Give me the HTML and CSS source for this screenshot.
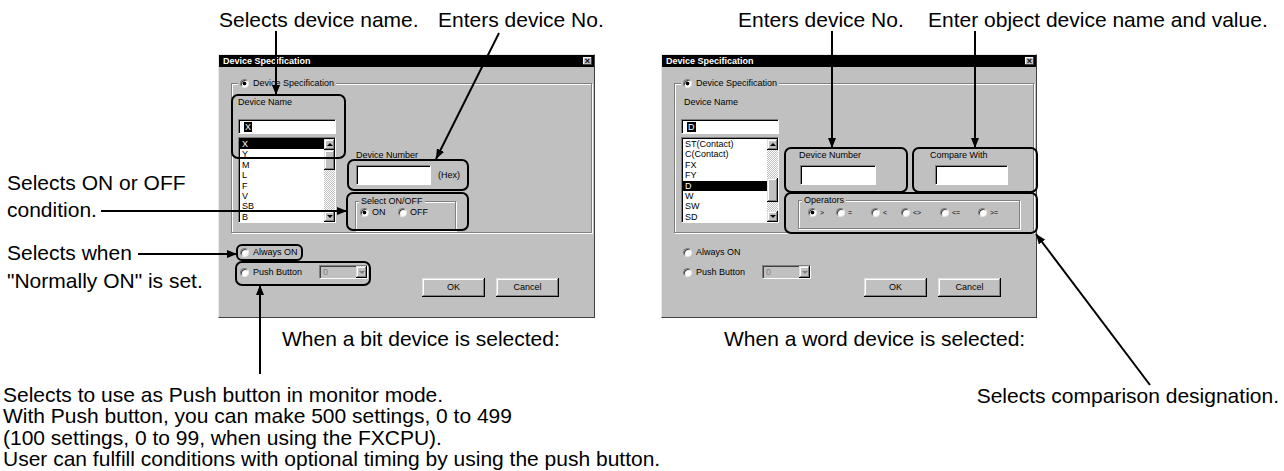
FILE: index.html
```html
<!DOCTYPE html>
<html lang="en">
<head>
    <meta charset="UTF-8">
    <title>Device Specification</title>
    <link rel="stylesheet" href="styles.css">
</head>
<body>
<div class="page">

    <div class="note n-name">Selects device name.</div>
    <div class="note n-number">Enters device No.</div>
    <div class="note n-number2">Enters device No.</div>
    <div class="note n-object">Enter object device name and value.</div>
    <div class="note n-onoff">Selects ON or OFF<br>condition.</div>
    <div class="note n-always">Selects when<br>"Normally ON" is set.</div>
    <div class="note n-bit">When a bit device is selected:</div>
    <div class="note n-word">When a word device is selected:</div>
    <div class="note n-push">Selects to use as Push button in monitor mode.<br>With Push button, you can make 500 settings, 0 to 499<br>(100 settings, 0 to 99, when using the FXCPU).<br>User can fulfill conditions with optional timing by using the push button.</div>
    <div class="note n-compare">Selects comparison designation.</div>

    <!-- bit device dialog -->
    <div class="dialog dlg-bit">
        <div class="titlebar"><span>Device Specification</span><span class="close">×</span></div>
        <div class="group main-group">
            <div class="legend"><span class="radio on"></span>Device Specification</div>
            <div class="group-body">
                <div class="name-col">
                    <div class="lbl">Device Name</div>
                    <div class="edit name-edit"><span class="sel">X</span></div>
                    <div class="list">
                        <ul class="items">
                            <li class="active">X</li>
                            <li>Y</li>
                            <li>M</li>
                            <li>L</li>
                            <li>F</li>
                            <li>V</li>
                            <li>SB</li>
                            <li>B</li>
                        </ul>
                        <div class="scrollbar">
                            <div class="sb-btn up"></div>
                            <div class="sb-track"><div class="sb-thumb"></div></div>
                            <div class="sb-btn down"></div>
                        </div>
                    </div>
                </div>
                <div class="spec">
                    <div class="lbl">Device Number</div>
                    <div class="num-row">
                        <div class="edit num-edit"></div>
                        <span class="hex">(Hex)</span>
                    </div>
                    <div class="group onoff">
                        <div class="legend small">Select ON/OFF</div>
                        <div class="choice-row">
                            <div class="opt w-on"><span class="radio on"></span>ON</div>
                            <div class="opt"><span class="radio"></span>OFF</div>
                        </div>
                    </div>
                </div>
            </div>
        </div>
        <div class="footer">
            <div class="options">
                <div class="opt"><span class="radio"></span>Always ON</div>
                <div class="opt push"><span class="radio"></span>Push Button
                    <div class="combo"><span class="combo-val">0</span><span class="combo-btn"></span></div>
                </div>
            </div>
            <div class="buttons">
                <div class="btn">OK</div>
                <div class="btn">Cancel</div>
            </div>
        </div>
    </div>

    <!-- word device dialog -->
    <div class="dialog dlg-word">
        <div class="titlebar"><span>Device Specification</span><span class="close">×</span></div>
        <div class="group main-group">
            <div class="legend"><span class="radio on"></span>Device Specification</div>
            <div class="group-body">
                <div class="name-col">
                    <div class="lbl">Device Name</div>
                    <div class="edit name-edit"><span class="sel">D</span></div>
                    <div class="list">
                        <ul class="items">
                            <li>ST(Contact)</li>
                            <li>C(Contact)</li>
                            <li>FX</li>
                            <li>FY</li>
                            <li class="active">D</li>
                            <li>W</li>
                            <li>SW</li>
                            <li>SD</li>
                        </ul>
                        <div class="scrollbar">
                            <div class="sb-btn up"></div>
                            <div class="sb-track"><div class="sb-thumb mid"></div></div>
                            <div class="sb-btn down"></div>
                        </div>
                    </div>
                </div>
                <div class="spec">
                    <div class="fields">
                        <div class="field">
                            <div class="lbl">Device Number</div>
                            <div class="edit word-edit"></div>
                        </div>
                        <div class="field compare">
                            <div class="lbl">Compare With</div>
                            <div class="edit cmp-edit"></div>
                        </div>
                    </div>
                    <div class="group operators">
                        <div class="legend small">Operators</div>
                        <div class="choice-row ops">
                            <div class="opt w-gt"><span class="radio on"></span>&gt;</div>
                            <div class="opt w-eq"><span class="radio"></span>=</div>
                            <div class="opt w-lt"><span class="radio"></span>&lt;</div>
                            <div class="opt w-ne"><span class="radio"></span>&lt;&gt;</div>
                            <div class="opt w-le"><span class="radio"></span>&lt;=</div>
                            <div class="opt"><span class="radio"></span>&gt;=</div>
                        </div>
                    </div>
                </div>
            </div>
        </div>
        <div class="footer">
            <div class="options">
                <div class="opt"><span class="radio"></span>Always ON</div>
                <div class="opt push"><span class="radio"></span>Push Button
                    <div class="combo"><span class="combo-val">0</span><span class="combo-btn"></span></div>
                </div>
            </div>
            <div class="buttons">
                <div class="btn">OK</div>
                <div class="btn">Cancel</div>
            </div>
        </div>
    </div>

    <!-- callouts and leader lines -->
    <svg class="marks" width="1284" height="471" viewBox="0 0 1284 471">
        <defs>
            <marker id="tip" markerUnits="userSpaceOnUse" markerWidth="10" markerHeight="8" refX="10" refY="4" orient="auto">
                <path d="M0,0 L10,4 L0,8 z" fill="#000"/>
            </marker>
        </defs>
        <g fill="none" stroke="#000" stroke-width="2">
            <rect x="232" y="95" width="113" height="63" rx="6"/>
            <rect x="348" y="160" width="120" height="30" rx="6"/>
            <rect x="347" y="193" width="121" height="37" rx="6"/>
            <rect x="237" y="245" width="65" height="15" rx="5"/>
            <rect x="236" y="262" width="134" height="23" rx="6"/>
            <rect x="785" y="148" width="122" height="44" rx="6"/>
            <rect x="913" y="148" width="124" height="44" rx="6"/>
            <rect x="785" y="193" width="252" height="40" rx="6"/>
        </g>
        <g stroke="#000" stroke-width="2" marker-end="url(#tip)">
            <line x1="276" y1="31" x2="276" y2="95"/>
            <line x1="499" y1="33" x2="436" y2="159"/>
            <line x1="101" y1="211" x2="347" y2="211"/>
            <line x1="138" y1="254" x2="237" y2="254"/>
            <line x1="260" y1="374" x2="260" y2="285"/>
            <line x1="832" y1="31" x2="832" y2="148"/>
            <line x1="975" y1="31" x2="975" y2="148"/>
            <line x1="1150" y1="385" x2="1036" y2="234"/>
        </g>
    </svg>
</div>
</body>
</html>
```

FILE: styles.css
```css
body {
    margin: 0;
    background-color: #fff;
}

.page {
    position: relative;
    width: 1284px;
    height: 471px;
    font-family: 'Liberation Sans', Arial, sans-serif;
    color: #000;
    overflow: hidden;
}

/* annotation text */

.note {
    position: absolute;
    font-size: 21px;
    line-height: 22px;
    white-space: nowrap;
}

.n-name { left: 219px; top: 9px; }
.n-number { left: 438px; top: 9px; }
.n-number2 { left: 738px; top: 9px; }
.n-object { left: 928px; top: 9px; }
.n-onoff { left: 7px; top: 169px; line-height: 27px; }
.n-always { left: 7px; top: 239px; line-height: 28px; }
.n-bit { left: 282px; top: 328px; }
.n-word { left: 724px; top: 328px; }
.n-push { left: 3px; top: 384px; line-height: 21.4px; }
.n-compare { right: 5px; top: 385px; }

.marks {
    position: absolute;
    top: 0;
    left: 0;
    pointer-events: none;
}

/* dialog window */

.dialog {
    position: absolute;
    top: 54px;
    width: 377px;
    height: 264px;
    box-sizing: border-box;
    background-color: #c0c0c0;
    border: 1px solid;
    border-color: #e8e8e8 #404040 #404040 #e8e8e8;
    font-size: 9px;
    line-height: 11px;
}

.dlg-bit { left: 218px; }
.dlg-word { left: 661px; width: 376px; }

.titlebar {
    height: 12px;
    background-color: #000;
    color: #fff;
    font-weight: bold;
    display: flex;
    align-items: center;
    justify-content: space-between;
    padding: 0 2px 0 4px;
}

.close {
    width: 9px;
    height: 8px;
    background-color: #c0c0c0;
    color: #000;
    font-size: 9px;
    line-height: 8px;
    text-align: center;
    box-shadow: inset -1px -1px #404040, inset 1px 1px #fff;
}

.group {
    box-sizing: border-box;
    border: 1px solid #808080;
    box-shadow: inset 1px 1px #fff, 1px 1px #fff;
}

.main-group {
    margin: 16px 2px 0 12px;
    height: 150px;
}

.legend {
    display: flex;
    align-items: center;
    gap: 4px;
    width: max-content;
    height: 11px;
    margin: -6px 0 0 6px;
    padding: 0 2px;
    background-color: #c0c0c0;
}

.legend.small {
    margin-left: 3px;
}

.group-body {
    display: flex;
    padding-left: 6px;
}

.name-col {
    width: 98px;
    padding-top: 8px;
}

.lbl {
    height: 11px;
}

.dlg-word .name-col .lbl {
    padding-left: 3px;
}

/* sunken fields */

.edit {
    box-sizing: border-box;
    background-color: #fff;
    border: 1px solid;
    border-color: #808080 #fff #fff #808080;
    box-shadow: inset 1px 1px #000;
}

.name-edit {
    margin-top: 11px;
    height: 15px;
    display: flex;
    align-items: center;
    padding-left: 5px;
}

.sel {
    background-color: #000;
    color: #fff;
    padding: 0 1px;
    line-height: 10px;
}

.list {
    margin-top: 3px;
    height: 86px;
    display: flex;
    box-sizing: border-box;
    background-color: #fff;
    border: 1px solid;
    border-color: #808080 #fff #fff #808080;
    box-shadow: inset 1px 1px #000;
}

.items {
    list-style: none;
    margin: 0;
    padding: 1px 0 0 1px;
    flex: 1;
}

.items li {
    height: 10.4px;
    line-height: 10.4px;
    padding-left: 2px;
}

.items li.active {
    background-color: #000;
    color: #fff;
}

.scrollbar {
    width: 11px;
    display: flex;
    flex-direction: column;
    padding: 1px 0 0;
}

.sb-btn,
.sb-thumb,
.btn,
.combo-btn {
    background-color: #c0c0c0;
    box-shadow: inset -1px -1px #000, inset 1px 1px #dfdfdf, inset -2px -2px #808080, inset 2px 2px #fff;
}

.sb-btn {
    height: 11px;
    display: flex;
    align-items: center;
    justify-content: center;
}

.sb-btn::after {
    content: "";
    border-left: 3px solid transparent;
    border-right: 3px solid transparent;
}

.sb-btn.up::after { border-bottom: 3px solid #000; }
.sb-btn.down::after { border-top: 3px solid #000; }

.sb-track {
    flex: 1;
    background: repeating-conic-gradient(#fff 0 25%, #c0c0c0 0 50%) 0 0 / 2px 2px;
}

.sb-thumb {
    height: 20px;
}

.sb-thumb.mid {
    margin-top: 28px;
    height: 24px;
}

/* right side of the group */

.spec {
    margin-left: 20px;
    padding-top: 61px;
}

.num-row {
    display: flex;
    align-items: center;
    margin-top: 4px;
}

.num-edit {
    width: 75px;
    height: 20px;
}

.hex {
    margin-left: 7px;
}

.onoff {
    margin: 16px 0 0 -1px;
    width: 101px;
    height: 30px;
}

.choice-row {
    display: flex;
    align-items: center;
    height: 11px;
    padding-left: 4px;
}

.opt {
    display: flex;
    align-items: center;
    gap: 3px;
    height: 11px;
}

.w-on { width: 38px; }

.fields {
    display: flex;
}

.field .edit {
    margin-top: 4px;
    height: 20px;
}

.word-edit { width: 76px; margin-left: 1px; }

.compare {
    margin-left: 54px;
}

.cmp-edit {
    width: 73px;
    margin-left: 5px;
}

.operators {
    margin: 15px 0 0 -1px;
    width: 222px;
    height: 29px;
}

.ops {
    padding-left: 9px;
    margin-top: 1px;
    font-size: 7px;
}

.w-gt { width: 28px; }
.w-eq { width: 35px; }
.w-lt { width: 30px; }
.w-ne { width: 39px; }
.w-le { width: 38px; }

.radio {
    box-sizing: border-box;
    width: 9px;
    height: 9px;
    border-radius: 50%;
    background: #fff;
    border: 1px solid;
    border-color: #808080 #e8e8e8 #e8e8e8 #808080;
    box-shadow: inset 1px 1px #404040;
    flex-shrink: 0;
}

.radio.on {
    background: radial-gradient(circle, #000 0 1.6px, #fff 2.2px);
}

/* bottom part */

.footer {
    display: flex;
    align-items: flex-start;
}

.options {
    margin: 14px 0 0 21px;
    display: flex;
    flex-direction: column;
    gap: 7px;
}

.opt.push {
    height: 14px;
    gap: 4px;
}

.options .opt {
    gap: 4px;
}

.combo {
    margin-left: 13px;
    width: 49px;
    height: 14px;
    box-sizing: border-box;
    display: flex;
    border: 1px solid;
    border-color: #808080 #fff #fff #808080;
    box-shadow: inset 1px 1px #404040;
    color: #808080;
}

.combo-val {
    padding: 1px 0 0 3px;
    line-height: 11px;
}

.combo-btn {
    margin-left: auto;
    width: 11px;
    display: flex;
    align-items: center;
    justify-content: center;
}

.combo-btn::after {
    content: "";
    border-left: 3px solid transparent;
    border-right: 3px solid transparent;
    border-top: 3px solid #808080;
}

.buttons {
    display: flex;
    gap: 11px;
    margin: 45px 35px 0 auto;
}

.btn {
    width: 63px;
    height: 19px;
    display: flex;
    align-items: center;
    justify-content: center;
}
```
